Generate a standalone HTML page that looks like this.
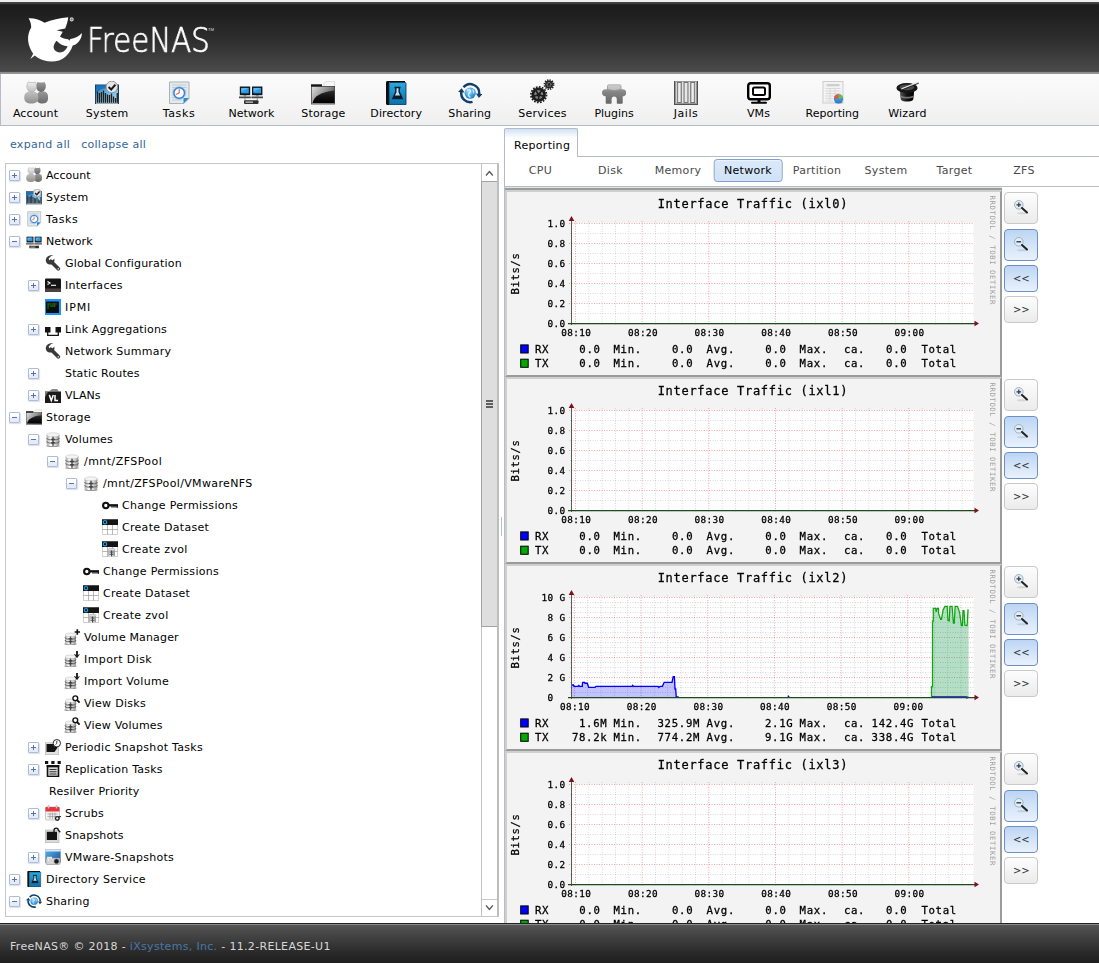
<!DOCTYPE html>
<html lang="en">
<head>
<meta charset="utf-8">
<title>FreeNAS</title>
<style>
html,body{margin:0;padding:0;}
body{width:1099px;height:963px;position:relative;overflow:hidden;background:#fff;
 font-family:"DejaVu Sans","Liberation Sans",sans-serif;font-size:11px;color:#000;}
.abs{position:absolute;}
#header{position:absolute;left:0;top:0;width:1099px;height:74px;
 background:linear-gradient(#eee 0,#eee 1.800px,#4c4c4c 2px,#3a3a3a 3.500px,#1d1d1d 5px,#1f1f1f 14px,#2e2e2e 40px,#4a4a4a 71px,#555 72px,#8a8a8a 72px,#999 74px);}
#logotext{position:absolute;left:87px;top:15px;font-family:"DejaVu Sans Light","DejaVu Sans",sans-serif;font-weight:200;font-size:34.5px;line-height:50px;color:#fff;
 transform-origin:0 0;transform:scaleX(.85);-webkit-text-stroke:.7px #fff;will-change:transform;white-space:nowrap;letter-spacing:0;}
#tm{position:absolute;left:208px;top:26.500px;font-size:4.200px;line-height:6px;color:#ddd;font-family:"Liberation Sans",sans-serif;}
#menubar{position:absolute;left:0;top:74px;width:1099px;height:51px;border-left:1px solid #b5bcc7;border-bottom:1px solid #b5bcc7;box-sizing:content-box;
 background:linear-gradient(#fbfbfb,#f6f6f6 50%,#efefef);}
.mi{position:absolute;top:0;width:90px;height:51px;text-align:center;margin-left:-46px;}
.mi svg{position:absolute;left:33px;top:6.500px;overflow:visible;width:24px;height:24px;}
.mi span{position:absolute;left:0;width:90px;top:33px;line-height:14px;font-size:11px;letter-spacing:.25px;color:#000;}
#links{position:absolute;left:10px;top:137px;font-size:11px;line-height:16px;letter-spacing:.3px;color:#336699;white-space:nowrap;}
#links span{margin-right:11px;}
#treebox{position:absolute;left:5px;top:163px;width:493.500px;height:753.500px;box-sizing:border-box;border:1px solid #c6c6c6;border-right-color:#bdbdbd;background:#fff;overflow:hidden;}
.row{position:absolute;left:0;height:22px;white-space:nowrap;}
.row .ex{position:absolute;top:6px;width:9px;height:9px;border:1px solid #afbcd8;border-radius:1px;background:linear-gradient(#fff 45%,#e6ecf7 55%);box-shadow:.5px 1px 1px rgba(150,165,200,.35);}
.row .ex:before{content:"";position:absolute;left:2px;top:4px;width:5px;height:1px;background:#5873a8;}
.row .ex.p:after{content:"";position:absolute;left:4px;top:2px;width:1px;height:5px;background:#5873a8;}
.row svg{position:absolute;top:3px;width:16px;height:16px;}
.row span{position:absolute;top:1px;line-height:22px;font-size:11px;letter-spacing:.22px;}
#sb{position:absolute;left:475px;top:0;width:16.500px;height:751.500px;background:#fff;border-left:1px solid #c4c4c4;box-sizing:border-box;}
#sb .up{position:absolute;left:0;top:0;width:15.500px;height:16.700px;background:#fff;}
#sb .th{position:absolute;left:-1px;top:16.700px;width:17.200px;height:446.200px;box-sizing:border-box;border:1px solid #a3a3a3;background:#dedede;}
#sb .th i{position:absolute;left:4px;width:7px;height:1.700px;background:#5e5e5e;}
#sb .dn{position:absolute;left:0;top:735px;width:15.500px;height:16.500px;border-top:1px solid #c8c8c8;background:#fff;}
#sb svg{position:absolute;left:0;top:0;width:16px;height:17px;}
#treebox:after{content:"";position:absolute;right:0;top:0;width:.7px;height:100%;background:#bdbdbd;}
#footer{position:absolute;left:0;top:923px;width:1099px;height:40px;
 background:linear-gradient(#222 0,#222 1px,#8a8a8a 1px,#8a8a8a 2px,#555 2.500px,#4a4a4a 8px,#2c2c2c 28px,#1e1e1e 40px);}
#footer div{position:absolute;left:10px;top:17px;line-height:14px;font-size:11px;letter-spacing:.32px;color:#d8d8d8;white-space:nowrap;}
#footer i{font-style:normal;color:#4a78a8;}
#split{position:absolute;left:499px;top:127px;width:4px;height:795px;background:#fff;}
#split i{position:absolute;left:2px;top:390px;width:1px;height:19px;background:#b9c0cc;}
#right{position:absolute;left:504px;top:127px;width:595px;height:795px;}
#vline{position:absolute;left:0;top:2px;width:1px;height:794px;background:#b5bcc7;}
#tab{position:absolute;left:0;top:1px;width:74px;height:29px;border:1px solid #b5bcc7;border-bottom:none;border-radius:2px 2px 0 0;box-sizing:border-box;
 background:linear-gradient(#cfe0f5 0,#e6effa 4px,#fff 9px);font-size:11px;letter-spacing:.3px;line-height:14px;padding:10px 0 0 9px;color:#000;}
#tabline{position:absolute;left:73px;top:29px;width:523px;height:1px;background:#b5bcc7;}
#subtabs{position:absolute;left:0;top:0;width:595px;height:0;}
#subtabs span{position:absolute;top:37px;transform:translateX(-50%);font-size:11px;letter-spacing:.3px;line-height:14px;color:#4a4a4a;white-space:nowrap;}
#subtabs span.sel{top:32px;width:66.600px;height:20.800px;line-height:22.500px;text-align:center;border:1px solid #85a0c8;border-radius:3.500px;color:#000;margin-left:0;
 background:linear-gradient(#dbe9fa,#cfe2f7);box-shadow:inset 0 1px 0 #eaf3fd;}
#subline{position:absolute;left:0;top:59px;width:595px;height:1px;background:#b5bcc7;}
#prev{position:absolute;left:1px;top:60px;width:497px;height:3px;background:linear-gradient(#e4e4e4 0,#e4e4e4 1px,#9b9b9b 1px);}
.chart{position:absolute;left:1px;display:block;will-change:transform;}
.zb{position:absolute;left:0;margin-left:500.300px;width:32px;border:1px solid #c9c9c9;border-radius:4px;background:linear-gradient(#fdfdfd,#f5f5f5 45%,#ebebeb);
 text-align:center;font-size:10px;line-height:25px;color:#333;letter-spacing:-.2px;}
.zb.on{border-color:#6c90c2;background:linear-gradient(#bcd5f3,#d3e4f8 50%,#e9f1fc);}
.zb svg{position:absolute;left:7.300px;top:5.500px;width:16px;height:16px;}
</style>
</head>
<body>
<svg width="0" height="0" style="position:absolute">
<defs>
<linearGradient id="gAccL" x1="0" y1="0" x2="0" y2="1"><stop offset="0" stop-color="#c4c4c4"/><stop offset="1" stop-color="#8e8e8e"/></linearGradient>
<linearGradient id="gAccH" x1="0" y1="0" x2="0" y2="1"><stop offset="0" stop-color="#f2f2f2"/><stop offset="1" stop-color="#bdbdbd"/></linearGradient>
<linearGradient id="gAccR" x1="0" y1="0" x2="0" y2="1"><stop offset="0" stop-color="#9a9a9a"/><stop offset="1" stop-color="#6a6a6a"/></linearGradient>
<linearGradient id="gBlue" x1="0" y1="0" x2="0" y2="1"><stop offset="0" stop-color="#2aa9e0"/><stop offset="1" stop-color="#0c6fa8"/></linearGradient>
<linearGradient id="gSys" x1="0" y1="0" x2="1" y2="1"><stop offset="0" stop-color="#1f74b6"/><stop offset=".5" stop-color="#6cbeec"/><stop offset="1" stop-color="#a9dbf7"/></linearGradient>
<linearGradient id="gFold" x1="0" y1="0" x2="0" y2="1"><stop offset="0" stop-color="#2e2e2e"/><stop offset=".5" stop-color="#121212"/><stop offset="1" stop-color="#000"/></linearGradient>
<linearGradient id="gFoldHi" x1="0" y1="0" x2="1" y2=".6"><stop offset="0" stop-color="#e4e4e4"/><stop offset=".5" stop-color="#9a9a9a"/><stop offset="1" stop-color="#4a4a4a"/></linearGradient>
<linearGradient id="gPlug" x1="0" y1="0" x2="0" y2="1"><stop offset="0" stop-color="#b8b8b8"/><stop offset=".4" stop-color="#858585"/><stop offset="1" stop-color="#666"/></linearGradient>
<linearGradient id="gHat" x1="0" y1="0" x2="1" y2="0"><stop offset="0" stop-color="#555"/><stop offset=".5" stop-color="#111"/><stop offset="1" stop-color="#000"/></linearGradient>
<radialGradient id="gGlobe" cx=".4" cy=".35" r=".7"><stop offset="0" stop-color="#bfe6fb"/><stop offset=".6" stop-color="#3aa2e2"/><stop offset="1" stop-color="#1f7fc4"/></radialGradient>

<symbol id="i-acc" viewBox="0 0 24 24">
 <path d="M12.500 16.500C12.500 12 15 10.200 18.300 10.200C21.800 10.200 24.200 12 24.200 16.500C24.200 21 21.800 22.600 18.300 22.600C15 22.600 12.500 21 12.500 16.500Z" fill="url(#gAccR)"/>
 <path d="M12.600 2.800L13.600 .9L15.300 1.500H18.700L20.400 .9L21.400 2.800C22.600 5.500 21.500 10.900 17 10.900C12.500 10.900 11.400 5.500 12.600 2.800Z" fill="url(#gAccR)"/>
 <path d="M.2 16.500C.2 12 3 10.200 7.300 10.200C11.600 10.200 14.400 12 14.400 16.500C14.400 21 11.600 22.600 7.300 22.600C3 22.600 .2 21 .2 16.500Z" fill="url(#gAccL)"/>
 <path d="M3.300 2.800L4.300 .9L6 1.500H9.400L11.100 .9L12.100 2.800C13.300 5.500 12.200 10.900 7.700 10.900C3.200 10.900 2.100 5.500 3.300 2.800Z" fill="url(#gAccH)" stroke="#a8a8a8" stroke-width=".6"/>
</symbol>

<symbol id="i-sys" viewBox="0 0 24 24">
 <rect x=".5" y="4" width="23" height="18.500" fill="url(#gSys)" stroke="#1d3f5f"/>
 <path d="M1 12C6 7 12 6 23 9V4.500H1Z" fill="#1c6fb4" opacity=".85"/>
 <path d="M2.500 22V10.500M4.500 22V12M6.500 22V11M8.500 22V9.500M10.500 22V12M12.500 22V13.500M14.500 22V14M16.500 22V12.500M18.500 22V15.500M20.500 22V17M22.300 22V12" stroke="#2a1a14" stroke-width="1.300"/>
 <path d="M1 22.300H23" stroke="#dfe9f2" stroke-width=".8"/>
 <circle cx="16.800" cy="6" r="5.800" fill="#e6e6e6" stroke="#8c8c8c" stroke-width=".9"/>
 <path d="M13.600 6L16.200 8.500L20.400 3.700" fill="none" stroke="#1a1a1a" stroke-width="2"/>
</symbol>

<symbol id="i-task" viewBox="0 0 24 24">
 <path d="M2.500 1H22V17.500L17 22.500H2.500Z" fill="#e6eaec" stroke="#a9b2b8"/>
 <path d="M5 4H19.500M5 6.500H19.500M5 9H19.500M5 11.500H19.500M5 14H19.500M5 16.500H17M5 19H15" stroke="#c3cbd0" stroke-width="1"/>
 <path d="M22 17L16.500 22.500V17Z" fill="#2b8ad6"/>
 <circle cx="12.200" cy="12" r="5.400" fill="#fff" stroke="#3585d8" stroke-width="1.700"/>
 <circle cx="12.200" cy="12" r="6.400" fill="none" stroke="#9cc4ee" stroke-width=".6"/>
 <path d="M12.200 12V8.200M12.200 12L8.800 13.500" stroke="#c0392b" stroke-width=".9" fill="none"/>
</symbol>

<symbol id="i-net" viewBox="0 0 24 24">
 <rect x=".8" y="5.500" width="10.400" height="8.700" fill="#10161e"/><rect x="2.200" y="6.900" width="7.600" height="5.400" fill="#2a9be6"/>
 <path d="M2.200 6.900H9.800L2.200 11Z" fill="#6cc0f4" opacity=".7"/>
 <rect x="13" y="5.500" width="10.400" height="8.700" fill="#10161e"/><rect x="14.400" y="6.900" width="7.600" height="5.400" fill="#2a9be6"/>
 <path d="M14.400 6.900H22L14.400 11Z" fill="#6cc0f4" opacity=".7"/>
 <path d="M0 16.300H11.800M12.400 16.300H24" stroke="#4a4a4a" stroke-width="1.700"/>
 <path d="M4.500 14.200H7.500V15.500H4.500ZM16.700 14.200H19.700V15.500H16.700Z" fill="#777"/>
 <path d="M6 17V20M18.200 17V20" stroke="#9a9a9a" stroke-width="1"/>
 <rect x="5" y="19.300" width="14.500" height="3.700" rx="1" fill="#2e2e2e"/>
 <rect x="6.500" y="20.500" width="7.500" height="1.300" fill="#c4c4c4"/>
</symbol>

<symbol id="i-stor" viewBox="0 0 24 24">
 <path d="M13 6.500V2.500L15 .3H23.700V7Z" fill="#f6f6f6" stroke="#c9c9c9" stroke-width=".6"/>
 <path d="M0 3.300H11V5.800H0Z" fill="#151515"/>
 <rect x=".3" y="5.500" width="23.400" height="17.500" fill="url(#gFoldHi)" stroke="#2a2a2a" stroke-width=".7"/>
 <path d="M1.500 22C3 15.500 9 11 23.400 9.500V22.300H1.500Z" fill="url(#gFold)"/>
 <path d="M.5 22.700H23.500" stroke="#9a9a9a" stroke-width=".9"/>
</symbol>

<symbol id="i-dir" viewBox="0 0 24 24">
 <path d="M2 1.500C2 .7 2.700 0 3.500 0H21V1.500H5V24H3.500C2.700 24 2 23.300 2 22.500Z" fill="#0d0d0d"/>
 <rect x="5" y="1.500" width="17" height="22.500" rx=".8" fill="url(#gBlue)"/>
 <rect x="5" y="1.500" width="17" height="22.500" rx=".8" fill="none" stroke="#0a2f48" stroke-width=".8"/>
 <path d="M10.500 6.500H16.500M11.800 6.500V11L8.800 17.500H18.200L15.200 11V6.500" fill="#bfe4f7" stroke="#081d2c" stroke-width="1.400"/>
 <path d="M10.300 14.500H16.700L18.200 17.500H8.800Z" fill="#081d2c"/>
</symbol>

<symbol id="i-share" viewBox="0 0 24 24">
 <circle cx="12.2" cy="12.2" r="5.600" fill="url(#gGlobe)"/>
 <path d="M9 9.500C10.500 8 12 8.800 12.500 10C13 11.500 11 12 10.500 13.500C10 15 11.500 15.800 12.500 16.300M14.500 8.500C15.500 9.500 16.300 10.500 15.800 12.500" fill="none" stroke="#eaf6ff" stroke-width="1.300" opacity=".85"/>
 <path d="M14.53 20.89A9 9 0 0 1 3.29 10.95" fill="none" stroke="#123f66" stroke-width="2.500"/>
 <path d="M-0.03 10.91L6.53 11.60L3.68 7.16Z" fill="#123f66"/>
 <path d="M5.51 6.18A9 9 0 0 1 21.15 13.14" fill="none" stroke="#123f66" stroke-width="2.300"/>
 <path d="M24.47 13.06L17.89 12.60L20.89 16.94Z" fill="#123f66"/>
</symbol>

<symbol id="i-serv" viewBox="0 0 24 24" overflow="visible">
 <circle cx="7.7" cy="13.7" r="7.80" fill="none" stroke="#1e1e1e" stroke-width="1.700" stroke-dasharray="1.68 1.38"/><circle cx="7.7" cy="13.7" r="7.20" fill="#1e1e1e"/><circle cx="7.7" cy="13.7" r="4.46" fill="#8a8a8a"/><path d="M7.7 13.7L12.23 15.17M7.7 13.7L7.70 18.46M7.7 13.7L3.17 15.17M7.7 13.7L4.90 9.85M7.7 13.7L10.50 9.85" stroke="#1e1e1e" stroke-width="1.7"/><circle cx="7.7" cy="13.7" r="2.01" fill="#1e1e1e"/>
 <circle cx="18" cy="3.6" r="4.60" fill="none" stroke="#262626" stroke-width="1.700" stroke-dasharray="1.32 1.08"/><circle cx="18" cy="3.6" r="4.00" fill="#262626"/><circle cx="18" cy="3.6" r="2.48" fill="#a0a0a0"/><path d="M18 3.6L20.64 4.46M18 3.6L18.00 6.38M18 3.6L15.36 4.46M18 3.6L16.37 1.35M18 3.6L19.63 1.35" stroke="#262626" stroke-width="1.1"/><circle cx="18" cy="3.6" r="1.12" fill="#262626"/>
</symbol>

<symbol id="i-plug" viewBox="0 0 24 24">
 <path d="M5 5.300C5 4.100 5.900 3.300 7 3.300H17.500C18.600 3.300 19.500 4.100 19.500 5.300V8.300H21C22.900 8.300 24.300 9.800 24.300 11.700C24.300 13.800 22.800 15.300 21 15.300H20.700V21.700C20.700 22.300 20.300 22.700 19.700 22.700H15.800C15.200 22.700 14.800 22.300 14.800 21.700V18.200C14.800 16.600 13.600 15.600 12.200 15.600C10.800 15.600 9.600 16.600 9.600 18.200V21.700C9.600 22.300 9.200 22.700 8.600 22.700H4.700C4.100 22.700 3.700 22.300 3.700 21.700V15.300H3.300C1.500 15.300 0 13.800 0 11.700C0 9.800 1.400 8.300 3.300 8.300H5Z" fill="url(#gPlug)"/>
 <path d="M6 5.500C6 4.700 6.600 4.200 7.300 4.200H17.200C17.900 4.200 18.500 4.700 18.500 5.500V8C14 9.500 10 9.500 6 8Z" fill="#e0e0e0" opacity=".55"/>
</symbol>

<symbol id="i-jail" viewBox="0 0 24 24">
 <rect x=".5" y="-.5" width="23" height="24" fill="#bdbdbd" stroke="#505050"/>
 <rect x="1.600" y=".6" width="20.800" height="21.800" fill="#e4e4e4" stroke="#8a8a8a" stroke-width=".8"/>
 <rect x="3.300" y="1.500" width="4" height="20" fill="#d4d4d4" stroke="#6a6a6a" stroke-width=".9"/>
 <rect x="10" y="1.500" width="4" height="20" fill="#d4d4d4" stroke="#6a6a6a" stroke-width=".9"/>
 <rect x="16.700" y="1.500" width="4" height="20" fill="#d4d4d4" stroke="#6a6a6a" stroke-width=".9"/>
 <path d="M5.300 2V21M12 2V21M18.700 2V21" stroke="#f2f2f2" stroke-width="1.200"/>
</symbol>

<symbol id="i-vm" viewBox="0 0 24 24">
 <rect x="1.200" y="2.200" width="21.600" height="16" rx="2.500" fill="#fff" stroke="#000" stroke-width="2.400"/>
 <rect x="6" y="6.500" width="12" height="7.500" rx="1.500" fill="none" stroke="#000" stroke-width="2"/>
 <path d="M12 18V21" stroke="#000" stroke-width="3"/>
 <path d="M5 21.800H19" stroke="#000" stroke-width="2" stroke-linecap="round"/>
</symbol>

<symbol id="i-rep" viewBox="0 0 24 24">
 <rect x="3" y=".5" width="20" height="21.500" fill="#f3f3f3" stroke="#cdcdcd"/>
 <rect x="6.500" y="3" width="13" height="2.300" fill="#cfcfcf"/>
 <path d="M5.500 7.500H20.500M5.500 10H20.500M5.500 12.500H20.500M5.500 15H14M5.500 17.500H13M5.500 20H13M10 7.500V20M15 7.500V14" stroke="#d6d6d6" stroke-width=".9"/>
 <circle cx="18.500" cy="17.900" r="4.700" fill="#3d8fdc"/>
 <path d="M18.500 17.900L13.900 16.800A4.700 4.700 0 0 1 18.800 13.200Z" fill="#f2542d"/>
 <path d="M18.500 17.900L18.800 13.200A4.700 4.700 0 0 1 23.100 17Z" fill="#6cc04a"/>
 <ellipse cx="18.500" cy="21.300" rx="4" ry="1.300" fill="#1f5fa8" opacity=".35"/>
</symbol>

<symbol id="i-wiz" viewBox="0 0 24 24">
 <path d="M4 9C4 13 4.300 16.500 5 19C7.500 21 14.500 21 17 19C17.700 16.500 18 13 18 9Z" fill="url(#gHat)"/>
 <path d="M4.300 14.500C8 16.300 14 16.300 17.700 14.500L17.500 16.300C14 18 8 18 4.500 16.300Z" fill="#8a8a8a" opacity=".8"/>
 <ellipse cx="11" cy="7" rx="10.600" ry="4.900" fill="#161616"/>
 <ellipse cx="10.800" cy="6.300" rx="7.500" ry="2.900" fill="#4a4a4a"/>
 <path d="M5.500 8L22.500 1.300" stroke="#e0e0e0" stroke-width="1.500"/>
 <path d="M5.800 8.900L22.800 2.200" stroke="#1a1a1a" stroke-width=".9"/>
</symbol>
<linearGradient id="gDisk" x1="0" y1="0" x2="1" y2="0"><stop offset="0" stop-color="#a2a2a2"/><stop offset=".3" stop-color="#fbfbfb"/><stop offset=".7" stop-color="#d2d2d2"/><stop offset="1" stop-color="#8c8c8c"/></linearGradient>
<linearGradient id="gWin" x1="0" y1="0" x2="1" y2="1"><stop offset="0" stop-color="#5bb4ee"/><stop offset="1" stop-color="#0f4f9a"/></linearGradient>
<symbol id="t-wrench" viewBox="0 0 16 16">
 <path d="M5.800 6.300L13.300 13.800" stroke="#3a3a3a" stroke-width="3.700" stroke-linecap="round"/>
 <path d="M8.200 .8C5.800 -.2 2.800 .6 1.500 2.800C.5 4.400 .6 6.200 1.400 7.500C2.600 9.500 5.300 10.100 7.300 9C9.200 7.900 10 5.600 9.200 3.700L6.500 6.300L4.300 5.700L3.700 3.500L6.200 .9Z" fill="#3a3a3a"/>
 <circle cx="13.300" cy="13.800" r=".8" fill="#e8e8e8"/>
</symbol>
<symbol id="t-term" viewBox="0 0 16 16">
 <rect x="0" y="1.500" width="16" height="13.500" rx="1" fill="#151515"/>
 <rect x="0" y="11.500" width="16" height="3.500" fill="#4a4242"/>
 <path d="M2.500 4.500L5 6L2.500 7.500" fill="none" stroke="#fff" stroke-width="1.100"/>
 <path d="M6 8.300H11" stroke="#fff" stroke-width="1.100"/>
</symbol>
<symbol id="t-ipmi" viewBox="0 0 16 16">
 <rect x="0" y="0" width="16" height="16" fill="#1e90ff"/>
 <rect x="1" y="2.500" width="13" height="11.500" fill="#0b0f0b"/>
 <path d="M2.500 5H6.500M7.500 5H11.500M2.500 7H4.500M5.500 7H10.500M2.500 9H3.500" stroke="#2fd02f" stroke-width="1" stroke-dasharray="1.200 .6"/>
</symbol>
<symbol id="t-lagg" viewBox="0 0 16 16">
 <rect x="0" y="6" width="5.500" height="5.500" fill="#141414"/>
 <rect x="10.500" y="6" width="5.500" height="5.500" fill="#141414"/>
 <path d="M2.700 11V14.300H13.300V11" fill="none" stroke="#141414" stroke-width="1.300"/>
</symbol>
<symbol id="t-vlan" viewBox="0 0 16 16">
 <path d="M4 4.500L7 2H12L14 4.500Z" fill="#8a8a8a"/>
 <rect x="0" y="4.500" width="16" height="11.500" fill="#1b1b1b"/>
 <path d="M0 10L3 5H0Z" fill="#777"/>
 <path d="M4.300 8L6.300 13.500L8.300 8M10 8V13.500H13" fill="none" stroke="#fff" stroke-width="1.500"/>
</symbol>
<symbol id="t-disk" viewBox="0 0 16 16">
 <ellipse cx="8" cy="14.900" rx="6.900" ry="1.300" fill="#4a4a4a" opacity=".55"/>
 <path d="M1.600 3.800V13C1.600 14.200 4.500 15.100 8 15.100C11.500 15.100 14.400 14.200 14.400 13V3.800Z" fill="url(#gDisk)"/>
 <ellipse cx="8" cy="3.800" rx="6.400" ry="2" fill="#f4f4f4" stroke="#b9b9b9" stroke-width=".5"/>
 <path d="M1.600 7C1.600 8.200 4.500 9 8 9C11.500 9 14.400 8.200 14.400 7M1.600 10.300C1.600 11.500 4.500 12.300 8 12.300C11.500 12.300 14.400 11.500 14.400 10.300" fill="none" stroke="#4a4a4a" stroke-width=".8"/>
 <path d="M8 5.800V14.800" stroke="#3a3a3a" stroke-width="1.500" opacity=".85"/>
 <path d="M5.800 8.300H10.200M5.800 11.600H10.200" stroke="#3a3a3a" stroke-width="1.300" opacity=".85"/>
</symbol>
<symbol id="t-disk2" viewBox="0 0 16 16">
 <ellipse cx="6.500" cy="15.100" rx="6.300" ry="1.100" fill="#4a4a4a" opacity=".55"/>
 <path d="M1 5.800V13.500C1 14.600 3.500 15.400 6.500 15.400C9.500 15.400 12 14.600 12 13.500V5.800Z" fill="url(#gDisk)"/>
 <ellipse cx="6.500" cy="5.800" rx="5.500" ry="1.800" fill="#f4f4f4" stroke="#b9b9b9" stroke-width=".5"/>
 <path d="M1 8.500C1 9.600 3.500 10.300 6.500 10.300C9.500 10.300 12 9.600 12 8.500M1 11.200C1 12.300 3.500 13 6.500 13C9.500 13 12 12.300 12 11.200" fill="none" stroke="#4a4a4a" stroke-width=".8"/>
 <path d="M6.500 7.500V15.200" stroke="#3a3a3a" stroke-width="1.400" opacity=".85"/>
 <path d="M4.500 9.700H8.500M4.500 12.400H8.500" stroke="#3a3a3a" stroke-width="1.200" opacity=".85"/>
</symbol>
<symbol id="t-volman" viewBox="0 0 16 16"><use href="#t-disk2"/>
 <path d="M13.300 .3V5.700M10.600 3H16" stroke="#111" stroke-width="1.700"/>
</symbol>
<symbol id="t-import" viewBox="0 0 16 16"><use href="#t-disk2"/>
 <path d="M13 0V4" stroke="#111" stroke-width="1.800"/>
 <path d="M9.800 2.800L13 7.300L16.200 2.800L13 4.300Z" fill="#111"/>
</symbol>
<symbol id="t-view" viewBox="0 0 16 16"><use href="#t-disk2"/>
 <circle cx="11.300" cy="3.300" r="2.400" fill="#fff" stroke="#111" stroke-width="1.400"/>
 <path d="M13 5L15.600 7.600" stroke="#111" stroke-width="1.800"/>
</symbol>
<symbol id="t-key" viewBox="0 0 16 16">
 <circle cx="3.800" cy="8.500" r="2.700" fill="none" stroke="#111" stroke-width="2.100"/>
 <path d="M6.500 8.300H16" stroke="#111" stroke-width="2.300"/>
 <path d="M10 9V10.800M12 9V10.800M14 9V10.800M15.500 9V10.800" stroke="#111" stroke-width="1.100"/>
</symbol>
<symbol id="t-dset" viewBox="0 0 16 16">
 <rect x=".3" y=".5" width="15.400" height="15" fill="#fff" stroke="#b5b5b5" stroke-width=".6"/>
 <path d="M.3 10.500H15.700M5.500 5.500V15.500M10.500 5.500V15.500" stroke="#9a9a9a" stroke-width=".7"/>
 <rect x="0" y=".3" width="16" height="5.700" fill="#141414"/>
 <circle cx="3" cy="3.200" r="1.700" fill="#111" stroke="#18a0e8" stroke-width="1.200"/>
</symbol>
<symbol id="t-zvol" viewBox="0 0 16 16"><use href="#t-dset"/>
 <path d="M6 8.500V14.500C6 15.200 7.600 15.700 9.500 15.700C11.400 15.700 13 15.200 13 14.500V8.500Z" fill="url(#gDisk)"/>
 <ellipse cx="9.500" cy="8.500" rx="3.500" ry="1.300" fill="#ddd" stroke="#999" stroke-width=".5"/>
 <path d="M9.500 9.500V15.500M7.500 11H11.500M7.500 13.300H11.500" stroke="#444" stroke-width="1.100"/>
</symbol>
<symbol id="t-psnap" viewBox="0 0 16 16">
 <rect x=".3" y="3.800" width="13.400" height="12" fill="#e1e1e1" stroke="#b0b0b0" stroke-width=".6"/>
 <path d="M1.500 5H12.300V9L9.500 13H1.500Z" fill="#141414"/>
 <circle cx="11.800" cy="4.200" r="3.700" fill="#fff" stroke="#111" stroke-width=".9"/>
 <path d="M11.800 1.800V4.500L10.500 5.500" fill="none" stroke="#111" stroke-width=".8"/>
</symbol>
<symbol id="t-repl" viewBox="0 0 16 16">
 <rect x="0" y="0" width="3.200" height="3" fill="#111"/><rect x="6.300" y="0" width="3.200" height="3" fill="#111"/><rect x="12.600" y="0" width="3.200" height="3" fill="#111"/>
 <rect x="2.500" y="5.500" width="11" height="10" fill="#d5d5d5" stroke="#111" stroke-width="1.600"/>
 <path d="M4.500 8.500H11.500M4.500 10.800H11.500M4.500 13H11.500" stroke="#333" stroke-width="1.100"/>
 <path d="M1.500 4.800H14.500" stroke="#111" stroke-width="1.600"/>
</symbol>
<symbol id="t-scrub" viewBox="0 0 16 16">
 <rect x=".5" y="2" width="14" height="13" rx="1" fill="#f1f1f1" stroke="#b5b5b5" stroke-width=".7"/>
 <path d="M.5 3C.5 2.400 1 2 1.500 2H13.500C14 2 14.500 2.400 14.500 3V6.500H.5Z" fill="#e8343a"/>
 <path d="M2.500 9H12.500M2.500 11.500H12.500M5 7.500V14M7.500 7.500V14M10 7.500V14" stroke="#9a9a9a" stroke-width=".7"/>
 <rect x="2.800" y=".5" width="1.400" height="3" rx=".6" fill="#ddd" stroke="#888" stroke-width=".4"/><rect x="10.800" y=".5" width="1.400" height="3" rx=".6" fill="#ddd" stroke="#888" stroke-width=".4"/>
 <circle cx="12.300" cy="13.500" r="1.800" fill="none" stroke="#222" stroke-width="1.300"/>
 <path d="M13.600 12.300C14.500 11.500 15.500 11.300 15.800 12" fill="none" stroke="#222" stroke-width="1.300"/>
</symbol>
<symbol id="t-snap" viewBox="0 0 16 16">
 <rect x=".3" y="3" width="13.700" height="12.700" fill="#d9d9d9" stroke="#b5b5b5" stroke-width=".6"/>
 <rect x="1.800" y="4.800" width="10.200" height="8.200" fill="#141414"/>
 <path d="M9 5V3.200C9 .3 13.300 .3 13.300 3.200L15.300 5.300" fill="none" stroke="#141414" stroke-width="1.300"/>
</symbol>
<symbol id="t-vmsnap" viewBox="0 0 16 16">
 <rect x=".3" y=".5" width="15.400" height="13" fill="url(#gWin)" stroke="#9ab" stroke-width=".5"/>
 <rect x=".3" y=".5" width="15.400" height="2" fill="#dfe6ee"/>
 <rect x="1" y="9" width="14" height="6.500" rx="1.200" fill="#d5d5d5" stroke="#8a8a8a" stroke-width=".6"/>
 <rect x="2" y="7.800" width="5" height="1.800" fill="#eee"/>
 <circle cx="11.500" cy="12.300" r="2.400" fill="#1a1a1a" stroke="#666" stroke-width=".6"/>
 <circle cx="3.500" cy="11" r=".7" fill="#fff"/>
</symbol>
<symbol id="b-zin" viewBox="0 0 16 16">
 <ellipse cx="9" cy="14.300" rx="5" ry="1" fill="#c9c9c9" opacity=".7"/>
 <circle cx="5.800" cy="5.800" r="4.300" fill="#e3edf5" stroke="#9fb0c0" stroke-width="1"/>
 <path d="M3.500 5.800H8.100M5.800 3.500V8.100" stroke="#2c3a48" stroke-width="1.200"/>
 <path d="M9 9L14 13.500" stroke="#222" stroke-width="2" stroke-linecap="round"/>
</symbol>
<symbol id="b-zout" viewBox="0 0 16 16">
 <ellipse cx="9" cy="14.300" rx="5" ry="1" fill="#b9c4d4" opacity=".7"/>
 <circle cx="5.800" cy="5.800" r="4.300" fill="#e3edf5" stroke="#9fb0c0" stroke-width="1"/>
 <path d="M3.500 5.800H8.100" stroke="#2c3a48" stroke-width="1.400"/>
 <path d="M9 9L14 13.500" stroke="#222" stroke-width="2" stroke-linecap="round"/>
</symbol>
</defs>
</svg>
<div id="header">
<svg id="shark" width="64" height="50" viewBox="24 14 64 50" style="position:absolute;left:24px;top:14px">
<path fill="#fff" fill-rule="evenodd" d="M28.600 18.300C34 18 40.500 19.800 44.600 22.800C51.500 19.800 60 18 68.300 17.200C67.800 21 66.700 25 65.200 28.500L56.500 30.200L62.800 31.700L60 36.500C62.500 38.300 65.500 39.300 68.200 39.300L69.300 40.700L70.300 39.100C75 38.500 79.200 36.500 81.800 33.100C82 37 80 41.200 76.500 43.800C75.200 44.800 73.800 45.300 72.700 45.600C71.500 49.500 69 53.800 65.200 57C61.500 60 56.500 61.700 51.500 61.600C46.500 61.500 42 60.300 38.200 58.100C37 57.400 35.800 56.500 34.800 55.600L30.400 58.900L33.200 53.700C30.500 50 28.600 45.500 28.100 40.500C27.700 35.500 29 31 31.200 27.500C31.300 24.500 30.300 21 28.600 18.300ZM56.600 40.700C54.500 43 53.300 45.800 53.700 48C54.200 50.500 56.500 52.200 59.500 52.400C63 52.600 66.200 50.300 67.600 46.300C63.500 46 59.500 44 56.600 40.700Z"/>
<circle cx="71.700" cy="19.400" r="1.500" fill="#777" stroke="#ccc" stroke-width="1.100"/>
</svg>
<div id="tm">TM</div>
<div id="logotext">FreeNAS</div>
</div>
<div id="menubar">
<div class="mi" style="left:35.5px"><svg viewBox="0 0 24 24"><use href="#i-acc"/></svg><span style="letter-spacing:0.1px">Account</span></div>
<div class="mi" style="left:107.2px"><svg viewBox="0 0 24 24"><use href="#i-sys"/></svg><span style="letter-spacing:0.27px">System</span></div>
<div class="mi" style="left:179px"><svg viewBox="0 0 24 24"><use href="#i-task"/></svg><span style="letter-spacing:0.63px">Tasks</span></div>
<div class="mi" style="left:251.4px"><svg viewBox="0 0 24 24"><use href="#i-net"/></svg><span style="letter-spacing:0.01px">Network</span></div>
<div class="mi" style="left:323.4px"><svg viewBox="0 0 24 24"><use href="#i-stor"/></svg><span style="letter-spacing:0.16px">Storage</span></div>
<div class="mi" style="left:396.2px"><svg viewBox="0 0 24 24"><use href="#i-dir"/></svg><span style="letter-spacing:0.11px">Directory</span></div>
<div class="mi" style="left:469.7px"><svg viewBox="0 0 24 24"><use href="#i-share"/></svg><span style="letter-spacing:0.06px">Sharing</span></div>
<div class="mi" style="left:542.5px"><svg viewBox="0 0 24 24"><use href="#i-serv"/></svg><span style="letter-spacing:0.26px">Services</span></div>
<div class="mi" style="left:614px"><svg viewBox="0 0 24 24"><use href="#i-plug"/></svg><span style="letter-spacing:-0.03px">Plugins</span></div>
<div class="mi" style="left:686px"><svg viewBox="0 0 24 24"><use href="#i-jail"/></svg><span style="letter-spacing:0.54px">Jails</span></div>
<div class="mi" style="left:758.5px"><svg viewBox="0 0 24 24"><use href="#i-vm"/></svg><span style="letter-spacing:0.12px">VMs</span></div>
<div class="mi" style="left:832.3px"><svg viewBox="0 0 24 24"><use href="#i-rep"/></svg><span style="letter-spacing:-0.01px">Reporting</span></div>
<div class="mi" style="left:907.5px"><svg viewBox="0 0 24 24"><use href="#i-wiz"/></svg><span style="letter-spacing:0.13px">Wizard</span></div>
</div>
<div id="links"><span>expand all</span><span>collapse all</span></div>
<div id="treebox">
<div class="row" style="top:0px"><b class="ex p" style="left:3px"></b><svg viewBox="0 0 24 24" style="left:20px"><use href="#i-acc"/></svg><span style="left:40px;letter-spacing:0.03px">Account</span></div>
<div class="row" style="top:22px"><b class="ex p" style="left:3px"></b><svg viewBox="0 0 24 24" style="left:20px"><use href="#i-sys"/></svg><span style="left:40px;letter-spacing:0.26px">System</span></div>
<div class="row" style="top:44px"><b class="ex p" style="left:3px"></b><svg viewBox="0 0 24 24" style="left:20px"><use href="#i-task"/></svg><span style="left:40px;letter-spacing:0.56px">Tasks</span></div>
<div class="row" style="top:66px"><b class="ex" style="left:3px"></b><svg viewBox="0 0 24 24" style="left:20px"><use href="#i-net"/></svg><span style="left:40px;letter-spacing:0.1px">Network</span></div>
<div class="row" style="top:88px"><svg viewBox="0 0 16 16" style="left:39px"><use href="#t-wrench"/></svg><span style="left:59px;letter-spacing:0.18px">Global Configuration</span></div>
<div class="row" style="top:110px"><b class="ex p" style="left:22px"></b><svg viewBox="0 0 16 16" style="left:39px"><use href="#t-term"/></svg><span style="left:59px;letter-spacing:0.28px">Interfaces</span></div>
<div class="row" style="top:132px"><svg viewBox="0 0 16 16" style="left:39px"><use href="#t-ipmi"/></svg><span style="left:59px;letter-spacing:0.89px">IPMI</span></div>
<div class="row" style="top:154px"><b class="ex p" style="left:22px"></b><svg viewBox="0 0 16 16" style="left:39px"><use href="#t-lagg"/></svg><span style="left:59px;letter-spacing:0.17px">Link Aggregations</span></div>
<div class="row" style="top:176px"><svg viewBox="0 0 16 16" style="left:39px"><use href="#t-wrench"/></svg><span style="left:59px;letter-spacing:0.24px">Network Summary</span></div>
<div class="row" style="top:198px"><b class="ex p" style="left:22px"></b><span style="left:59px;letter-spacing:0.16px">Static Routes</span></div>
<div class="row" style="top:220px"><b class="ex p" style="left:22px"></b><svg viewBox="0 0 16 16" style="left:39px"><use href="#t-vlan"/></svg><span style="left:59px;letter-spacing:0.0px">VLANs</span></div>
<div class="row" style="top:242px"><b class="ex" style="left:3px"></b><svg viewBox="0 0 24 24" style="left:20px"><use href="#i-stor"/></svg><span style="left:40px;letter-spacing:0.26px">Storage</span></div>
<div class="row" style="top:264px"><b class="ex" style="left:22px"></b><svg viewBox="0 0 16 16" style="left:39px"><use href="#t-disk"/></svg><span style="left:59px;letter-spacing:0.18px">Volumes</span></div>
<div class="row" style="top:286px"><b class="ex" style="left:41px"></b><svg viewBox="0 0 16 16" style="left:58px"><use href="#t-disk"/></svg><span style="left:78px;letter-spacing:0.45px">/mnt/ZFSPool</span></div>
<div class="row" style="top:308px"><b class="ex" style="left:60px"></b><svg viewBox="0 0 16 16" style="left:77px"><use href="#t-disk"/></svg><span style="left:97px;letter-spacing:0.36px">/mnt/ZFSPool/VMwareNFS</span></div>
<div class="row" style="top:330px"><svg viewBox="0 0 16 16" style="left:96px"><use href="#t-key"/></svg><span style="left:116px;letter-spacing:0.3px">Change Permissions</span></div>
<div class="row" style="top:352px"><svg viewBox="0 0 16 16" style="left:96px"><use href="#t-dset"/></svg><span style="left:116px;letter-spacing:0.29px">Create Dataset</span></div>
<div class="row" style="top:374px"><svg viewBox="0 0 16 16" style="left:96px"><use href="#t-zvol"/></svg><span style="left:116px;letter-spacing:0.32px">Create zvol</span></div>
<div class="row" style="top:396px"><svg viewBox="0 0 16 16" style="left:77px"><use href="#t-key"/></svg><span style="left:97px;letter-spacing:0.3px">Change Permissions</span></div>
<div class="row" style="top:418px"><svg viewBox="0 0 16 16" style="left:77px"><use href="#t-dset"/></svg><span style="left:97px;letter-spacing:0.28px">Create Dataset</span></div>
<div class="row" style="top:440px"><svg viewBox="0 0 16 16" style="left:77px"><use href="#t-zvol"/></svg><span style="left:97px;letter-spacing:0.31px">Create zvol</span></div>
<div class="row" style="top:462px"><svg viewBox="0 0 16 16" style="left:58px"><use href="#t-volman"/></svg><span style="left:78px;letter-spacing:0.15px">Volume Manager</span></div>
<div class="row" style="top:484px"><svg viewBox="0 0 16 16" style="left:58px"><use href="#t-import"/></svg><span style="left:78px;letter-spacing:0.41px">Import Disk</span></div>
<div class="row" style="top:506px"><svg viewBox="0 0 16 16" style="left:58px"><use href="#t-import"/></svg><span style="left:78px;letter-spacing:0.32px">Import Volume</span></div>
<div class="row" style="top:528px"><svg viewBox="0 0 16 16" style="left:58px"><use href="#t-view"/></svg><span style="left:78px;letter-spacing:0.31px">View Disks</span></div>
<div class="row" style="top:550px"><svg viewBox="0 0 16 16" style="left:58px"><use href="#t-view"/></svg><span style="left:78px;letter-spacing:0.21px">View Volumes</span></div>
<div class="row" style="top:572px"><b class="ex p" style="left:22px"></b><svg viewBox="0 0 16 16" style="left:39px"><use href="#t-psnap"/></svg><span style="left:59px;letter-spacing:0.29px">Periodic Snapshot Tasks</span></div>
<div class="row" style="top:594px"><b class="ex p" style="left:22px"></b><svg viewBox="0 0 16 16" style="left:39px"><use href="#t-repl"/></svg><span style="left:59px;letter-spacing:0.23px">Replication Tasks</span></div>
<div class="row" style="top:616px"><span style="left:43px;letter-spacing:0.26px">Resilver Priority</span></div>
<div class="row" style="top:638px"><b class="ex p" style="left:22px"></b><svg viewBox="0 0 16 16" style="left:39px"><use href="#t-scrub"/></svg><span style="left:59px;letter-spacing:0.29px">Scrubs</span></div>
<div class="row" style="top:660px"><svg viewBox="0 0 16 16" style="left:39px"><use href="#t-snap"/></svg><span style="left:59px;letter-spacing:0.18px">Snapshots</span></div>
<div class="row" style="top:682px"><b class="ex p" style="left:22px"></b><svg viewBox="0 0 16 16" style="left:39px"><use href="#t-vmsnap"/></svg><span style="left:59px;letter-spacing:0.26px">VMware-Snapshots</span></div>
<div class="row" style="top:704px"><b class="ex p" style="left:3px"></b><svg viewBox="0 0 24 24" style="left:20px"><use href="#i-dir"/></svg><span style="left:40px;letter-spacing:0.29px">Directory Service</span></div>
<div class="row" style="top:726px"><b class="ex" style="left:3px"></b><svg viewBox="0 0 24 24" style="left:20px"><use href="#i-share"/></svg><span style="left:40px;letter-spacing:0.19px">Sharing</span></div>
<div id="sb"><div class="up"><svg viewBox="0 0 16 17"><path d="M4 11.500L7.400 7.500L10.800 11.500" fill="none" stroke="#555" stroke-width="1.300"/></svg></div><div class="th"><i style="top:218.600px"></i><i style="top:221.600px"></i><i style="top:224.600px"></i></div><div class="dn"><svg viewBox="0 0 16 17"><path d="M4 5.300L7.400 9.500L10.800 5.300" fill="none" stroke="#555" stroke-width="1.300"/></svg></div></div></div>
<div id="split"><i></i></div>
<div id="right">
<div id="tab">Reporting</div><div id="tabline"></div><div id="vline"></div>
<div id="subtabs"><span style="left:36.500px">CPU</span><span style="left:106.500px">Disk</span><span style="left:174px">Memory</span><span class="sel" style="left:244px">Network</span><span style="left:313px">Partition</span><span style="left:382px">System</span><span style="left:450.500px">Target</span><span style="left:520px">ZFS</span></div><div id="subline"></div>
<div id="prev"></div>
<svg class="chart" style="top:63px" width="497" height="187" viewBox="0 0 497 187" font-family="'DejaVu Sans Mono','Liberation Mono',monospace">
<rect width="497" height="187" fill="#9b9b9b"/>
<path d="M0 0H497L495 2V185H2L0 187Z" fill="#cfcfcf"/>
<rect x="2" y="2" width="493" height="183" fill="#f3f3f3"/>
<rect x="67" y="33" width="401.500" height="100.500" fill="#fff"/>
<path d="M83.8 31V135M97.2 31V135M110.5 31V135M123.8 31V135M150.5 31V135M163.8 31V135M177.2 31V135M190.5 31V135M217.2 31V135M230.5 31V135M243.8 31V135M257.2 31V135M283.8 31V135M297.2 31V135M310.5 31V135M323.8 31V135M350.5 31V135M363.8 31V135M377.2 31V135M390.5 31V135M417.2 31V135M430.5 31V135M443.8 31V135M457.2 31V135M65 43.5H469M65 63.5H469M65 83.5H469M65 103.5H469M65 123.5H469" stroke="#b4b4b4" stroke-width="1" stroke-dasharray="1 1.500" fill="none" opacity=".52"/>
<path d="M70.5 31V135M137.2 31V135M203.8 31V135M270.5 31V135M337.2 31V135M403.8 31V135M64 33.5H469M64 53.5H469M64 73.5H469M64 93.5H469M64 113.5H469M64 133.5H469" stroke="#e06060" stroke-width="1" stroke-dasharray="1 1.500" fill="none" opacity=".55"/>

<path d="M66.500 29V135" stroke="#5a5a5a" stroke-width="1.050"/>
<path d="M63 133.600H470" stroke="#1f4a1f" stroke-width="1.300"/>
<path d="M66.500 26L69.300 31H63.700Z" fill="#7a1218"/>
<path d="M474 133.500L469.500 130.800V136.200Z" fill="#7a1218"/>
<text x="247.900" y="17.800" font-size="12" letter-spacing=".71" text-anchor="middle" fill="#000" stroke="#000" stroke-width=".28">Interface Traffic (ixl0)</text>
<text x="60.600" y="36.6" font-size="9.330" letter-spacing=".38" text-anchor="end" fill="#000" stroke="#000" stroke-width=".28" xml:space="preserve">1.0</text>
<text x="60.600" y="56.6" font-size="9.330" letter-spacing=".38" text-anchor="end" fill="#000" stroke="#000" stroke-width=".28" xml:space="preserve">0.8</text>
<text x="60.600" y="76.6" font-size="9.330" letter-spacing=".38" text-anchor="end" fill="#000" stroke="#000" stroke-width=".28" xml:space="preserve">0.6</text>
<text x="60.600" y="96.6" font-size="9.330" letter-spacing=".38" text-anchor="end" fill="#000" stroke="#000" stroke-width=".28" xml:space="preserve">0.4</text>
<text x="60.600" y="116.6" font-size="9.330" letter-spacing=".38" text-anchor="end" fill="#000" stroke="#000" stroke-width=".28" xml:space="preserve">0.2</text>
<text x="60.600" y="136.6" font-size="9.330" letter-spacing=".38" text-anchor="end" fill="#000" stroke="#000" stroke-width=".28" xml:space="preserve">0.0</text>
<text x="71.2" y="145.900" font-size="9.330" letter-spacing=".38" text-anchor="middle" fill="#000" stroke="#000" stroke-width=".28">08:10</text>
<text x="137.9" y="145.900" font-size="9.330" letter-spacing=".38" text-anchor="middle" fill="#000" stroke="#000" stroke-width=".28">08:20</text>
<text x="204.5" y="145.900" font-size="9.330" letter-spacing=".38" text-anchor="middle" fill="#000" stroke="#000" stroke-width=".28">08:30</text>
<text x="271.2" y="145.900" font-size="9.330" letter-spacing=".38" text-anchor="middle" fill="#000" stroke="#000" stroke-width=".28">08:40</text>
<text x="337.9" y="145.900" font-size="9.330" letter-spacing=".38" text-anchor="middle" fill="#000" stroke="#000" stroke-width=".28">08:50</text>
<text x="404.5" y="145.900" font-size="9.330" letter-spacing=".38" text-anchor="middle" fill="#000" stroke="#000" stroke-width=".28">09:00</text>
<text transform="translate(13.500 83.500) rotate(-90)" font-size="10.670" letter-spacing=".6" text-anchor="middle" fill="#000" stroke="#000" stroke-width=".28">Bits/s</text>
<text transform="translate(485.400 5.500) rotate(90)" font-size="7.330" letter-spacing=".56" fill="#9f9f9f">RRDTOOL / TOBI OETIKER</text>
<rect x="15.700" y="154.9" width="7.500" height="8.100" fill="#0000ff" stroke="#000" stroke-width="1"/>
<text font-size="10.670" letter-spacing=".68" y="162.8" fill="#000" stroke="#000" stroke-width=".28"><tspan x="29.900">RX</tspan>
<tspan x="95.6" text-anchor="end">0.0</tspan><tspan x="108.5" text-anchor="start">Min.</tspan>
<tspan x="188.3" text-anchor="end">0.0</tspan><tspan x="201.6" text-anchor="start">Avg.</tspan>
<tspan x="281.6" text-anchor="end">0.0</tspan><tspan x="294.6" text-anchor="start">Max.</tspan>
<tspan x="338.900">ca.</tspan>
<tspan x="402.4" text-anchor="end">0.0</tspan><tspan x="416.4" text-anchor="start">Total</tspan>
</text>
<rect x="15.700" y="169.2" width="7.500" height="8.100" fill="#00a800" stroke="#000" stroke-width="1"/>
<text font-size="10.670" letter-spacing=".68" y="177.1" fill="#000" stroke="#000" stroke-width=".28"><tspan x="29.900">TX</tspan>
<tspan x="95.6" text-anchor="end">0.0</tspan><tspan x="108.5" text-anchor="start">Min.</tspan>
<tspan x="188.3" text-anchor="end">0.0</tspan><tspan x="201.6" text-anchor="start">Avg.</tspan>
<tspan x="281.6" text-anchor="end">0.0</tspan><tspan x="294.6" text-anchor="start">Max.</tspan>
<tspan x="338.900">ca.</tspan>
<tspan x="402.4" text-anchor="end">0.0</tspan><tspan x="416.4" text-anchor="start">Total</tspan>
</text>
</svg>
<svg class="chart" style="top:250px" width="497" height="187" viewBox="0 0 497 187" font-family="'DejaVu Sans Mono','Liberation Mono',monospace">
<rect width="497" height="187" fill="#9b9b9b"/>
<path d="M0 0H497L495 2V185H2L0 187Z" fill="#cfcfcf"/>
<rect x="2" y="2" width="493" height="183" fill="#f3f3f3"/>
<rect x="67" y="33" width="401.500" height="100.500" fill="#fff"/>
<path d="M83.8 31V135M97.2 31V135M110.5 31V135M123.8 31V135M150.5 31V135M163.8 31V135M177.2 31V135M190.5 31V135M217.2 31V135M230.5 31V135M243.8 31V135M257.2 31V135M283.8 31V135M297.2 31V135M310.5 31V135M323.8 31V135M350.5 31V135M363.8 31V135M377.2 31V135M390.5 31V135M417.2 31V135M430.5 31V135M443.8 31V135M457.2 31V135M65 43.5H469M65 63.5H469M65 83.5H469M65 103.5H469M65 123.5H469" stroke="#b4b4b4" stroke-width="1" stroke-dasharray="1 1.500" fill="none" opacity=".52"/>
<path d="M70.5 31V135M137.2 31V135M203.8 31V135M270.5 31V135M337.2 31V135M403.8 31V135M64 33.5H469M64 53.5H469M64 73.5H469M64 93.5H469M64 113.5H469M64 133.5H469" stroke="#e06060" stroke-width="1" stroke-dasharray="1 1.500" fill="none" opacity=".55"/>

<path d="M66.500 29V135" stroke="#5a5a5a" stroke-width="1.050"/>
<path d="M63 133.600H470" stroke="#1f4a1f" stroke-width="1.300"/>
<path d="M66.500 26L69.300 31H63.700Z" fill="#7a1218"/>
<path d="M474 133.500L469.500 130.800V136.200Z" fill="#7a1218"/>
<text x="247.900" y="17.800" font-size="12" letter-spacing=".71" text-anchor="middle" fill="#000" stroke="#000" stroke-width=".28">Interface Traffic (ixl1)</text>
<text x="60.600" y="36.6" font-size="9.330" letter-spacing=".38" text-anchor="end" fill="#000" stroke="#000" stroke-width=".28" xml:space="preserve">1.0</text>
<text x="60.600" y="56.6" font-size="9.330" letter-spacing=".38" text-anchor="end" fill="#000" stroke="#000" stroke-width=".28" xml:space="preserve">0.8</text>
<text x="60.600" y="76.6" font-size="9.330" letter-spacing=".38" text-anchor="end" fill="#000" stroke="#000" stroke-width=".28" xml:space="preserve">0.6</text>
<text x="60.600" y="96.6" font-size="9.330" letter-spacing=".38" text-anchor="end" fill="#000" stroke="#000" stroke-width=".28" xml:space="preserve">0.4</text>
<text x="60.600" y="116.6" font-size="9.330" letter-spacing=".38" text-anchor="end" fill="#000" stroke="#000" stroke-width=".28" xml:space="preserve">0.2</text>
<text x="60.600" y="136.6" font-size="9.330" letter-spacing=".38" text-anchor="end" fill="#000" stroke="#000" stroke-width=".28" xml:space="preserve">0.0</text>
<text x="71.2" y="145.900" font-size="9.330" letter-spacing=".38" text-anchor="middle" fill="#000" stroke="#000" stroke-width=".28">08:10</text>
<text x="137.9" y="145.900" font-size="9.330" letter-spacing=".38" text-anchor="middle" fill="#000" stroke="#000" stroke-width=".28">08:20</text>
<text x="204.5" y="145.900" font-size="9.330" letter-spacing=".38" text-anchor="middle" fill="#000" stroke="#000" stroke-width=".28">08:30</text>
<text x="271.2" y="145.900" font-size="9.330" letter-spacing=".38" text-anchor="middle" fill="#000" stroke="#000" stroke-width=".28">08:40</text>
<text x="337.9" y="145.900" font-size="9.330" letter-spacing=".38" text-anchor="middle" fill="#000" stroke="#000" stroke-width=".28">08:50</text>
<text x="404.5" y="145.900" font-size="9.330" letter-spacing=".38" text-anchor="middle" fill="#000" stroke="#000" stroke-width=".28">09:00</text>
<text transform="translate(13.500 83.500) rotate(-90)" font-size="10.670" letter-spacing=".6" text-anchor="middle" fill="#000" stroke="#000" stroke-width=".28">Bits/s</text>
<text transform="translate(485.400 5.500) rotate(90)" font-size="7.330" letter-spacing=".56" fill="#9f9f9f">RRDTOOL / TOBI OETIKER</text>
<rect x="15.700" y="154.9" width="7.500" height="8.100" fill="#0000ff" stroke="#000" stroke-width="1"/>
<text font-size="10.670" letter-spacing=".68" y="162.8" fill="#000" stroke="#000" stroke-width=".28"><tspan x="29.900">RX</tspan>
<tspan x="95.6" text-anchor="end">0.0</tspan><tspan x="108.5" text-anchor="start">Min.</tspan>
<tspan x="188.3" text-anchor="end">0.0</tspan><tspan x="201.6" text-anchor="start">Avg.</tspan>
<tspan x="281.6" text-anchor="end">0.0</tspan><tspan x="294.6" text-anchor="start">Max.</tspan>
<tspan x="338.900">ca.</tspan>
<tspan x="402.4" text-anchor="end">0.0</tspan><tspan x="416.4" text-anchor="start">Total</tspan>
</text>
<rect x="15.700" y="169.2" width="7.500" height="8.100" fill="#00a800" stroke="#000" stroke-width="1"/>
<text font-size="10.670" letter-spacing=".68" y="177.1" fill="#000" stroke="#000" stroke-width=".28"><tspan x="29.900">TX</tspan>
<tspan x="95.6" text-anchor="end">0.0</tspan><tspan x="108.5" text-anchor="start">Min.</tspan>
<tspan x="188.3" text-anchor="end">0.0</tspan><tspan x="201.6" text-anchor="start">Avg.</tspan>
<tspan x="281.6" text-anchor="end">0.0</tspan><tspan x="294.6" text-anchor="start">Max.</tspan>
<tspan x="338.900">ca.</tspan>
<tspan x="402.4" text-anchor="end">0.0</tspan><tspan x="416.4" text-anchor="start">Total</tspan>
</text>
</svg>
<svg class="chart" style="top:437px" width="497" height="187" viewBox="0 0 497 187" font-family="'DejaVu Sans Mono','Liberation Mono',monospace">
<rect width="497" height="187" fill="#9b9b9b"/>
<path d="M0 0H497L495 2V185H2L0 187Z" fill="#cfcfcf"/>
<rect x="2" y="2" width="493" height="183" fill="#f3f3f3"/>
<rect x="67" y="33" width="401.500" height="100.500" fill="#fff"/>
<path d="M82.7 31V135M96.1 31V135M109.4 31V135M122.7 31V135M149.4 31V135M162.7 31V135M176.1 31V135M189.4 31V135M216.1 31V135M229.4 31V135M242.7 31V135M256.1 31V135M282.7 31V135M296.1 31V135M309.4 31V135M322.7 31V135M349.4 31V135M362.7 31V135M376.1 31V135M389.4 31V135M416.1 31V135M429.4 31V135M442.7 31V135M456.1 31V135M65 38.5H469M65 43.5H469M65 48.5H469M65 58.5H469M65 63.5H469M65 68.5H469M65 78.5H469M65 83.5H469M65 88.5H469M65 98.5H469M65 103.5H469M65 108.5H469M65 118.5H469M65 123.5H469M65 128.5H469" stroke="#b4b4b4" stroke-width="1" stroke-dasharray="1 1.500" fill="none" opacity=".52"/>
<path d="M69.4 31V135M136.1 31V135M202.7 31V135M269.4 31V135M336.1 31V135M402.7 31V135M64 33.5H469M64 53.5H469M64 73.5H469M64 93.5H469M64 113.5H469M64 133.5H469" stroke="#e06060" stroke-width="1" stroke-dasharray="1 1.500" fill="none" opacity=".55"/>
<path d="M67.0 121.0L68.5 121.0L69.0 122.3L73.0 122.3L73.8 121.4L74.6 122.3L77.3 122.3L77.6 118.3L79.5 118.3L80.0 119.2L82.3 119.2L83.7 123.4L90.0 123.4L91.0 122.3L127.0 122.3L127.6 121.4L128.4 122.3L153.0 122.3L153.8 123.4L155.0 122.3L157.4 122.3L159.2 118.3L167.0 118.3L168.2 112.6L169.4 112.6L170.0 125.0L170.7 125.0L171.2 132.6L173.0 132.8L173.5 133.3L173.5 133.500L67 133.500Z" fill="#0000ff" fill-opacity=".24"/><path d="M426.5 133.3L426.5 122.6L427.5 122.6L427.5 57.2L428.3 57.2L428.3 44.4L430.6 44.4L431.2 47.8L432.1 44.4L433.4 44.4L433.7 49.7L435.6 55.3L436.4 55.3L438.1 45.9L439.9 42.4L442.2 42.4L443.0 56.5L444.3 56.9L444.9 42.4L447.1 42.4L448.4 59.0L449.3 59.0L450.1 42.4L452.4 42.4L454.6 48.4L456.4 61.5L457.4 61.5L458.0 46.6L459.0 46.6L459.9 61.1L462.1 61.5L463.0 45.9L463.6 45.9L463.6 133.3Z" fill="#008c3c" fill-opacity=".29"/><path d="M67.0 121.0L68.5 121.0L69.0 122.3L73.0 122.3L73.8 121.4L74.6 122.3L77.3 122.3L77.6 118.3L79.5 118.3L80.0 119.2L82.3 119.2L83.7 123.4L90.0 123.4L91.0 122.3L127.0 122.3L127.6 121.4L128.4 122.3L153.0 122.3L153.8 123.4L155.0 122.3L157.4 122.3L159.2 118.3L167.0 118.3L168.2 112.6L169.4 112.6L170.0 125.0L170.7 125.0L171.2 132.6L173.0 132.8L173.5 133.3" fill="none" stroke="#0000ff" stroke-width="1.350"/><path d="M283 133.300L283.500 132.300L284.200 133.300" fill="none" stroke="#0000ff" stroke-width="1.300"/><path d="M426.5 133.3L426.5 122.6L427.5 122.6L427.5 57.2L428.3 57.2L428.3 44.4L430.6 44.4L431.2 47.8L432.1 44.4L433.4 44.4L433.7 49.7L435.6 55.3L436.4 55.3L438.1 45.9L439.9 42.4L442.2 42.4L443.0 56.5L444.3 56.9L444.9 42.4L447.1 42.4L448.4 59.0L449.3 59.0L450.1 42.4L452.4 42.4L454.6 48.4L456.4 61.5L457.4 61.5L458.0 46.6L459.0 46.6L459.9 61.1L462.1 61.5L463.0 45.9L463.6 45.9" fill="none" stroke="#0aa80a" stroke-width="1.250"/><path d="M427 133H461L461.700 133.800L463.500 133" fill="none" stroke="#0000ff" stroke-width="1.700"/>
<path d="M66.500 29V135" stroke="#5a5a5a" stroke-width="1.050"/>
<path d="M63 133.600H470" stroke="#1f4a1f" stroke-width="1.300"/>
<path d="M66.500 26L69.300 31H63.700Z" fill="#7a1218"/>
<path d="M474 133.500L469.500 130.800V136.200Z" fill="#7a1218"/>
<text x="247.900" y="17.800" font-size="12" letter-spacing=".71" text-anchor="middle" fill="#000" stroke="#000" stroke-width=".28">Interface Traffic (ixl2)</text>
<text x="60.600" y="36.6" font-size="9.330" letter-spacing=".38" text-anchor="end" fill="#000" stroke="#000" stroke-width=".28" xml:space="preserve">10 G</text>
<text x="60.600" y="56.6" font-size="9.330" letter-spacing=".38" text-anchor="end" fill="#000" stroke="#000" stroke-width=".28" xml:space="preserve">8 G</text>
<text x="60.600" y="76.6" font-size="9.330" letter-spacing=".38" text-anchor="end" fill="#000" stroke="#000" stroke-width=".28" xml:space="preserve">6 G</text>
<text x="60.600" y="96.6" font-size="9.330" letter-spacing=".38" text-anchor="end" fill="#000" stroke="#000" stroke-width=".28" xml:space="preserve">4 G</text>
<text x="60.600" y="116.6" font-size="9.330" letter-spacing=".38" text-anchor="end" fill="#000" stroke="#000" stroke-width=".28" xml:space="preserve">2 G</text>
<text x="60.600" y="136.6" font-size="9.330" letter-spacing=".38" text-anchor="end" fill="#000" stroke="#000" stroke-width=".28" xml:space="preserve">0  </text>
<text x="70.1" y="145.900" font-size="9.330" letter-spacing=".38" text-anchor="middle" fill="#000" stroke="#000" stroke-width=".28">08:10</text>
<text x="136.8" y="145.900" font-size="9.330" letter-spacing=".38" text-anchor="middle" fill="#000" stroke="#000" stroke-width=".28">08:20</text>
<text x="203.4" y="145.900" font-size="9.330" letter-spacing=".38" text-anchor="middle" fill="#000" stroke="#000" stroke-width=".28">08:30</text>
<text x="270.1" y="145.900" font-size="9.330" letter-spacing=".38" text-anchor="middle" fill="#000" stroke="#000" stroke-width=".28">08:40</text>
<text x="336.8" y="145.900" font-size="9.330" letter-spacing=".38" text-anchor="middle" fill="#000" stroke="#000" stroke-width=".28">08:50</text>
<text x="403.4" y="145.900" font-size="9.330" letter-spacing=".38" text-anchor="middle" fill="#000" stroke="#000" stroke-width=".28">09:00</text>
<text transform="translate(13.500 83.500) rotate(-90)" font-size="10.670" letter-spacing=".6" text-anchor="middle" fill="#000" stroke="#000" stroke-width=".28">Bits/s</text>
<text transform="translate(485.400 5.500) rotate(90)" font-size="7.330" letter-spacing=".56" fill="#9f9f9f">RRDTOOL / TOBI OETIKER</text>
<rect x="15.700" y="154.9" width="7.500" height="8.100" fill="#0000ff" stroke="#000" stroke-width="1"/>
<text font-size="10.670" letter-spacing=".68" y="162.8" fill="#000" stroke="#000" stroke-width=".28"><tspan x="29.900">RX</tspan>
<tspan x="102.4" text-anchor="end">1.6M</tspan><tspan x="108.5" text-anchor="start">Min.</tspan>
<tspan x="195.1" text-anchor="end">325.9M</tspan><tspan x="201.6" text-anchor="start">Avg.</tspan>
<tspan x="288.4" text-anchor="end">2.1G</tspan><tspan x="294.6" text-anchor="start">Max.</tspan>
<tspan x="338.900">ca.</tspan>
<tspan x="409.2" text-anchor="end">142.4G</tspan><tspan x="416.4" text-anchor="start">Total</tspan>
</text>
<rect x="15.700" y="169.2" width="7.500" height="8.100" fill="#00a800" stroke="#000" stroke-width="1"/>
<text font-size="10.670" letter-spacing=".68" y="177.1" fill="#000" stroke="#000" stroke-width=".28"><tspan x="29.900">TX</tspan>
<tspan x="102.4" text-anchor="end">78.2k</tspan><tspan x="108.5" text-anchor="start">Min.</tspan>
<tspan x="195.1" text-anchor="end">774.2M</tspan><tspan x="201.6" text-anchor="start">Avg.</tspan>
<tspan x="288.4" text-anchor="end">9.1G</tspan><tspan x="294.6" text-anchor="start">Max.</tspan>
<tspan x="338.900">ca.</tspan>
<tspan x="409.2" text-anchor="end">338.4G</tspan><tspan x="416.4" text-anchor="start">Total</tspan>
</text>
</svg>
<svg class="chart" style="top:624px" width="497" height="187" viewBox="0 0 497 187" font-family="'DejaVu Sans Mono','Liberation Mono',monospace">
<rect width="497" height="187" fill="#9b9b9b"/>
<path d="M0 0H497L495 2V185H2L0 187Z" fill="#cfcfcf"/>
<rect x="2" y="2" width="493" height="183" fill="#f3f3f3"/>
<rect x="67" y="33" width="401.500" height="100.500" fill="#fff"/>
<path d="M83.8 31V135M97.2 31V135M110.5 31V135M123.8 31V135M150.5 31V135M163.8 31V135M177.2 31V135M190.5 31V135M217.2 31V135M230.5 31V135M243.8 31V135M257.2 31V135M283.8 31V135M297.2 31V135M310.5 31V135M323.8 31V135M350.5 31V135M363.8 31V135M377.2 31V135M390.5 31V135M417.2 31V135M430.5 31V135M443.8 31V135M457.2 31V135M65 43.5H469M65 63.5H469M65 83.5H469M65 103.5H469M65 123.5H469" stroke="#b4b4b4" stroke-width="1" stroke-dasharray="1 1.500" fill="none" opacity=".52"/>
<path d="M70.5 31V135M137.2 31V135M203.8 31V135M270.5 31V135M337.2 31V135M403.8 31V135M64 33.5H469M64 53.5H469M64 73.5H469M64 93.5H469M64 113.5H469M64 133.5H469" stroke="#e06060" stroke-width="1" stroke-dasharray="1 1.500" fill="none" opacity=".55"/>

<path d="M66.500 29V135" stroke="#5a5a5a" stroke-width="1.050"/>
<path d="M63 133.600H470" stroke="#1f4a1f" stroke-width="1.300"/>
<path d="M66.500 26L69.300 31H63.700Z" fill="#7a1218"/>
<path d="M474 133.500L469.500 130.800V136.200Z" fill="#7a1218"/>
<text x="247.900" y="17.800" font-size="12" letter-spacing=".71" text-anchor="middle" fill="#000" stroke="#000" stroke-width=".28">Interface Traffic (ixl3)</text>
<text x="60.600" y="36.6" font-size="9.330" letter-spacing=".38" text-anchor="end" fill="#000" stroke="#000" stroke-width=".28" xml:space="preserve">1.0</text>
<text x="60.600" y="56.6" font-size="9.330" letter-spacing=".38" text-anchor="end" fill="#000" stroke="#000" stroke-width=".28" xml:space="preserve">0.8</text>
<text x="60.600" y="76.6" font-size="9.330" letter-spacing=".38" text-anchor="end" fill="#000" stroke="#000" stroke-width=".28" xml:space="preserve">0.6</text>
<text x="60.600" y="96.6" font-size="9.330" letter-spacing=".38" text-anchor="end" fill="#000" stroke="#000" stroke-width=".28" xml:space="preserve">0.4</text>
<text x="60.600" y="116.6" font-size="9.330" letter-spacing=".38" text-anchor="end" fill="#000" stroke="#000" stroke-width=".28" xml:space="preserve">0.2</text>
<text x="60.600" y="136.6" font-size="9.330" letter-spacing=".38" text-anchor="end" fill="#000" stroke="#000" stroke-width=".28" xml:space="preserve">0.0</text>
<text x="71.2" y="145.900" font-size="9.330" letter-spacing=".38" text-anchor="middle" fill="#000" stroke="#000" stroke-width=".28">08:10</text>
<text x="137.9" y="145.900" font-size="9.330" letter-spacing=".38" text-anchor="middle" fill="#000" stroke="#000" stroke-width=".28">08:20</text>
<text x="204.5" y="145.900" font-size="9.330" letter-spacing=".38" text-anchor="middle" fill="#000" stroke="#000" stroke-width=".28">08:30</text>
<text x="271.2" y="145.900" font-size="9.330" letter-spacing=".38" text-anchor="middle" fill="#000" stroke="#000" stroke-width=".28">08:40</text>
<text x="337.9" y="145.900" font-size="9.330" letter-spacing=".38" text-anchor="middle" fill="#000" stroke="#000" stroke-width=".28">08:50</text>
<text x="404.5" y="145.900" font-size="9.330" letter-spacing=".38" text-anchor="middle" fill="#000" stroke="#000" stroke-width=".28">09:00</text>
<text transform="translate(13.500 83.500) rotate(-90)" font-size="10.670" letter-spacing=".6" text-anchor="middle" fill="#000" stroke="#000" stroke-width=".28">Bits/s</text>
<text transform="translate(485.400 5.500) rotate(90)" font-size="7.330" letter-spacing=".56" fill="#9f9f9f">RRDTOOL / TOBI OETIKER</text>
<rect x="15.700" y="154.9" width="7.500" height="8.100" fill="#0000ff" stroke="#000" stroke-width="1"/>
<text font-size="10.670" letter-spacing=".68" y="162.8" fill="#000" stroke="#000" stroke-width=".28"><tspan x="29.900">RX</tspan>
<tspan x="95.6" text-anchor="end">0.0</tspan><tspan x="108.5" text-anchor="start">Min.</tspan>
<tspan x="188.3" text-anchor="end">0.0</tspan><tspan x="201.6" text-anchor="start">Avg.</tspan>
<tspan x="281.6" text-anchor="end">0.0</tspan><tspan x="294.6" text-anchor="start">Max.</tspan>
<tspan x="338.900">ca.</tspan>
<tspan x="402.4" text-anchor="end">0.0</tspan><tspan x="416.4" text-anchor="start">Total</tspan>
</text>
<rect x="15.700" y="169.2" width="7.500" height="8.100" fill="#00a800" stroke="#000" stroke-width="1"/>
<text font-size="10.670" letter-spacing=".68" y="177.1" fill="#000" stroke="#000" stroke-width=".28"><tspan x="29.900">TX</tspan>
<tspan x="95.6" text-anchor="end">0.0</tspan><tspan x="108.5" text-anchor="start">Min.</tspan>
<tspan x="188.3" text-anchor="end">0.0</tspan><tspan x="201.6" text-anchor="start">Avg.</tspan>
<tspan x="281.6" text-anchor="end">0.0</tspan><tspan x="294.6" text-anchor="start">Max.</tspan>
<tspan x="338.900">ca.</tspan>
<tspan x="402.4" text-anchor="end">0.0</tspan><tspan x="416.4" text-anchor="start">Total</tspan>
</text>
</svg>
<div class="zb" style="top:65px;height:30px"><svg viewBox="0 0 16 16"><use href="#b-zin"/></svg></div><div class="zb on" style="top:102px;height:30px"><svg viewBox="0 0 16 16"><use href="#b-zout"/></svg></div><div class="zb on tx" style="top:138.3px;height:25px">&lt;&lt;</div><div class="zb tx" style="top:169px;height:25px">&gt;&gt;</div>
<div class="zb" style="top:252px;height:30px"><svg viewBox="0 0 16 16"><use href="#b-zin"/></svg></div><div class="zb on" style="top:289px;height:30px"><svg viewBox="0 0 16 16"><use href="#b-zout"/></svg></div><div class="zb on tx" style="top:325.3px;height:25px">&lt;&lt;</div><div class="zb tx" style="top:356px;height:25px">&gt;&gt;</div>
<div class="zb" style="top:439px;height:30px"><svg viewBox="0 0 16 16"><use href="#b-zin"/></svg></div><div class="zb on" style="top:476px;height:30px"><svg viewBox="0 0 16 16"><use href="#b-zout"/></svg></div><div class="zb on tx" style="top:512.3px;height:25px">&lt;&lt;</div><div class="zb tx" style="top:543px;height:25px">&gt;&gt;</div>
<div class="zb" style="top:626px;height:30px"><svg viewBox="0 0 16 16"><use href="#b-zin"/></svg></div><div class="zb on" style="top:663px;height:30px"><svg viewBox="0 0 16 16"><use href="#b-zout"/></svg></div><div class="zb on tx" style="top:699.3px;height:25px">&lt;&lt;</div><div class="zb tx" style="top:730px;height:25px">&gt;&gt;</div>
</div>
<div id="footer"><div>FreeNAS® © 2018 - <i>iXsystems, Inc.</i> - 11.2-RELEASE-U1</div></div>
</body>
</html>
